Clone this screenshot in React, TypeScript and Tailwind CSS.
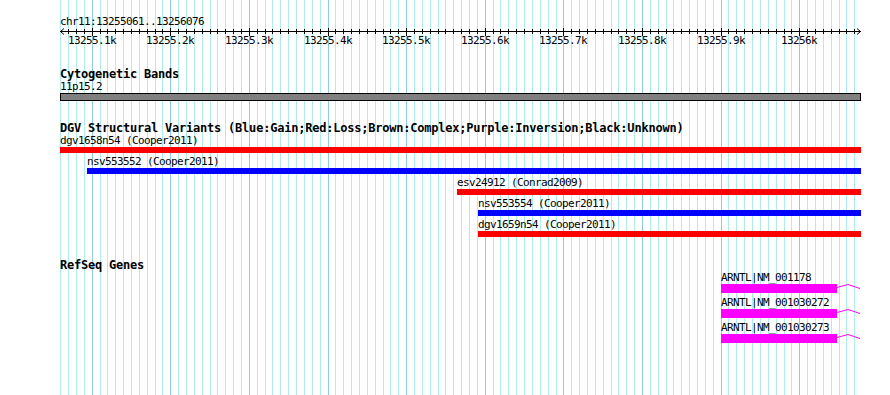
import React from "react";

const S = 0.7862;
const O = 61;
const X = (pos: number) => O + (pos - 13255061) * S;

const gridPositions: number[] = [];
for (let p = 13255060; p <= 13256070; p += 10) gridPositions.push(p);

const majorLabels = [
  { pos: 13255100, label: "13255.1k" },
  { pos: 13255200, label: "13255.2k" },
  { pos: 13255300, label: "13255.3k" },
  { pos: 13255400, label: "13255.4k" },
  { pos: 13255500, label: "13255.5k" },
  { pos: 13255600, label: "13255.6k" },
  { pos: 13255700, label: "13255.7k" },
  { pos: 13255800, label: "13255.8k" },
  { pos: 13255900, label: "13255.9k" },
  { pos: 13256000, label: "13256k" },
];

function Grid() {
  return (
    <svg className="absolute inset-0" width={890} height={395}>
      {gridPositions.map((p) => {
        const x = Math.round(X(p)) + 0.5;
        const major = p % 100 === 0;
        return (
          <line
            key={p}
            x1={x}
            x2={x}
            y1={0}
            y2={395}
            stroke={major ? "#8ccaf0" : "#afecee"}
            strokeWidth={1}
          />
        );
      })}
    </svg>
  );
}

function Ruler() {
  return (
    <svg width={890} height={18} className="block">
      <line x1={60} x2={861} y1={3.5} y2={3.5} stroke="#000" strokeWidth={1} />
      <polyline points="64,0.5 60.5,3.5 64,6.5" fill="none" stroke="#000" strokeWidth={1} />
      <polyline points="857,0.5 860.5,3.5 857,6.5" fill="none" stroke="#000" strokeWidth={1} />
      {gridPositions.slice(1).map((p) => {
        const x = Math.round(X(p)) + 0.5;
        const major = p % 100 === 0;
        return (
          <line
            key={p}
            x1={x}
            x2={x}
            y1={major ? 0 : 1}
            y2={major ? 8 : 6}
            stroke="#000"
            strokeWidth={1}
          />
        );
      })}
      {majorLabels.map((m) => (
        <text
          key={m.pos}
          x={Math.round(X(m.pos))}
          y={15.5}
          textAnchor="middle"
          fontFamily="'DejaVu Sans Mono', monospace"
          fontSize={11}
          letterSpacing={-0.62}
          fill="#000"
        >
          {m.label}
        </text>
      ))}
    </svg>
  );
}

type Variant = { label: string; ml: string; w: string; color: string };

const variants: Variant[] = [
  { label: "dgv1658n54 (Cooper2011)", ml: "ml-0", w: "w-[801px]", color: "bg-[#ff0000]" },
  { label: "nsv553552 (Cooper2011)", ml: "ml-[27px]", w: "w-[774px]", color: "bg-[#0000ff]" },
  { label: "esv24912 (Conrad2009)", ml: "ml-[397px]", w: "w-[404px]", color: "bg-[#ff0000]" },
  { label: "nsv553554 (Cooper2011)", ml: "ml-[418px]", w: "w-[383px]", color: "bg-[#0000ff]" },
  { label: "dgv1659n54 (Cooper2011)", ml: "ml-[418px]", w: "w-[383px]", color: "bg-[#ff0000]" },
];

const genes = ["ARNTL|NM_001178", "ARNTL|NM_001030272", "ARNTL|NM_001030273"];

const small = "text-[11px] leading-[12px] tracking-[-0.62px] whitespace-nowrap";
const rowLabel = "relative z-10 text-[11px] leading-[11px] mb-[1px] tracking-[-0.62px] whitespace-nowrap";
const title = "text-[12px] leading-[14px] tracking-[-0.22px] font-bold whitespace-nowrap";

export default function App() {
  return (
    <div className="relative w-[890px] h-[395px] bg-white overflow-hidden text-black font-['DejaVu_Sans_Mono',monospace]">
      <Grid />
      <div className="relative flex flex-col">
        <div className={`pl-[60px] pt-[16px] ${small}`}>chr11:13255061..13256076</div>
        <Ruler />

        <div className="mt-[21px] pl-[60px] flex flex-col items-start">
          <div className={title}>Cytogenetic Bands</div>
          <div className={small}>11p15.2</div>
          <div className="w-[801px] h-[8px] border border-black bg-[#808080]" />
        </div>

        <div className="mt-[20px] pl-[60px] flex flex-col items-start">
          <div className={title}>
            DGV Structural Variants (Blue:Gain;Red:Loss;Brown:Complex;Purple:Inversion;Black:Unknown)
          </div>
          {variants.map((v) => (
            <div key={v.label} className={`flex flex-col items-start h-[21px] ${v.ml}`}>
              <div className={rowLabel}>{v.label}</div>
              <div className={`h-[6px] ${v.w} ${v.color}`} />
            </div>
          ))}
        </div>

        <div className="mt-[18px] pl-[60px] flex flex-col items-start">
          <div className={title}>RefSeq Genes</div>
          {genes.map((g) => (
            <div key={g} className="flex flex-col items-start h-[25px] ml-[661px]">
              <div className={rowLabel}>{g}</div>
              <div className="flex items-start">
                <div className="h-[9px] w-[116px] bg-[#ff00ff]" />
                <svg width={24} height={9} className="block">
                  <polyline
                    points="0,3.5 11,0.5 23,4.5"
                    fill="none"
                    stroke="#ff00ff"
                    strokeWidth={1}
                  />
                </svg>
              </div>
            </div>
          ))}
        </div>
      </div>
    </div>
  );
}
